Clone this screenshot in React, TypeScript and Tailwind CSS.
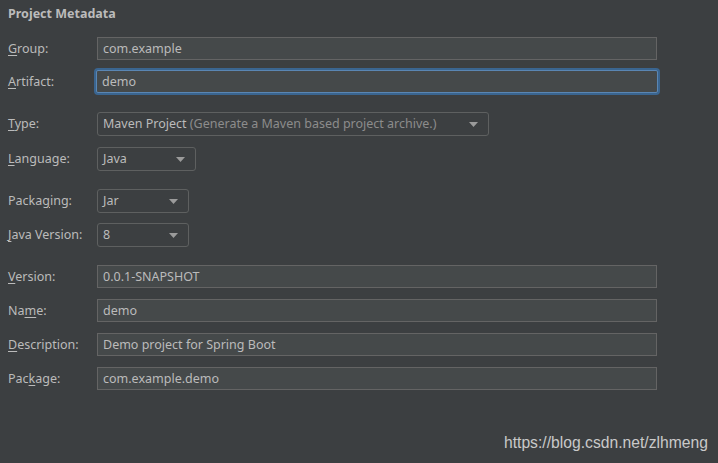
export default function App() {
  const font = { fontFamily: '"Noto Sans", "Open Sans", sans-serif' }

  const Label = ({ before, key1, after }: { before: string; key1: string; after: string }) => (
    <div className="w-[89px] shrink-0 pt-px text-[12.5px] text-[#bbbbbb]">
      {before}
      <span className="underline underline-offset-2">{key1}</span>
      {after}
    </div>
  )

  const Field = ({ value, focused }: { value: string; focused?: boolean }) => (
    <div
      className={
        focused
          ? 'w-[562px] -ml-px h-[23px] flex items-center pt-px px-[5px] bg-[#45494a] border border-[#5a86b3] ring-2 ring-[#3a6590] rounded-[2px] text-[12.5px] text-[#bbbbbb]'
          : 'w-[560px] h-[23px] flex items-center pt-px px-[5px] bg-[#45494a] border border-[#646464] text-[12.5px] text-[#bbbbbb]'
      }
    >
      {value}
    </div>
  )

  const Arrow = () => (
    <svg width="9" height="5" viewBox="0 0 9 5" className="shrink-0">
      <path d="M0 0 H9 L4.5 5 Z" fill="#9b9b9b" />
    </svg>
  )

  const Select = ({ width, children }: { width: string; children: React.ReactNode }) => (
    <div
      className={`${width} h-[24px] flex items-center justify-between pl-[5px] pr-[10px] border border-[#5e6060] rounded-[3px] text-[12.5px] text-[#bbbbbb]`}
    >
      <span className="pt-px">{children}</span>
      <Arrow />
    </div>
  )

  return (
    <div className="relative w-[718px] h-[463px] bg-[#3c3f41] overflow-hidden" style={font}>
      <div className="flex flex-col pt-[5px] px-2">
        <div className="h-[17px] leading-[17px] text-[12.5px] font-bold text-[#bbbbbb]">Project Metadata</div>

        <div className="mt-[15px] flex items-center">
          <Label before="" key1="G" after="roup:" />
          <Field value="com.example" />
        </div>
        <div className="mt-[10px] flex items-center">
          <Label before="" key1="A" after="rtifact:" />
          <Field value="demo" focused />
        </div>

        <div className="mt-[19px] flex items-center">
          <Label before="" key1="T" after="ype:" />
          <Select width="w-[392px]">
            Maven Project <span className="text-[#8c8c8c]">(Generate a Maven based project archive.)</span>
          </Select>
        </div>
        <div className="mt-[11px] flex items-center">
          <Label before="" key1="L" after="anguage:" />
          <Select width="w-[99px]">Java</Select>
        </div>

        <div className="mt-[18px] flex items-center">
          <Label before="Packa" key1="g" after="ing:" />
          <Select width="w-[92px]">Jar</Select>
        </div>
        <div className="mt-[10px] flex items-center">
          <Label before="" key1="J" after="ava Version:" />
          <Select width="w-[92px]">8</Select>
        </div>

        <div className="mt-[18px] flex items-center">
          <Label before="" key1="V" after="ersion:" />
          <Field value="0.0.1-SNAPSHOT" />
        </div>
        <div className="mt-[11px] flex items-center">
          <Label before="Na" key1="m" after="e:" />
          <Field value="demo" />
        </div>
        <div className="mt-[11px] flex items-center">
          <Label before="" key1="D" after="escription:" />
          <Field value="Demo project for Spring Boot" />
        </div>
        <div className="mt-[11px] flex items-center">
          <Label before="Pac" key1="k" after="age:" />
          <Field value="com.example.demo" />
        </div>
      </div>

      <div
        className="absolute right-[10px] top-[433px] text-[15.7px] leading-[20px] text-[#c9c9c9]"
        style={{ fontFamily: '"Liberation Sans", Arial, sans-serif' }}
      >
        https://blog.csdn.net/zlhmeng
      </div>
    </div>
  )
}
